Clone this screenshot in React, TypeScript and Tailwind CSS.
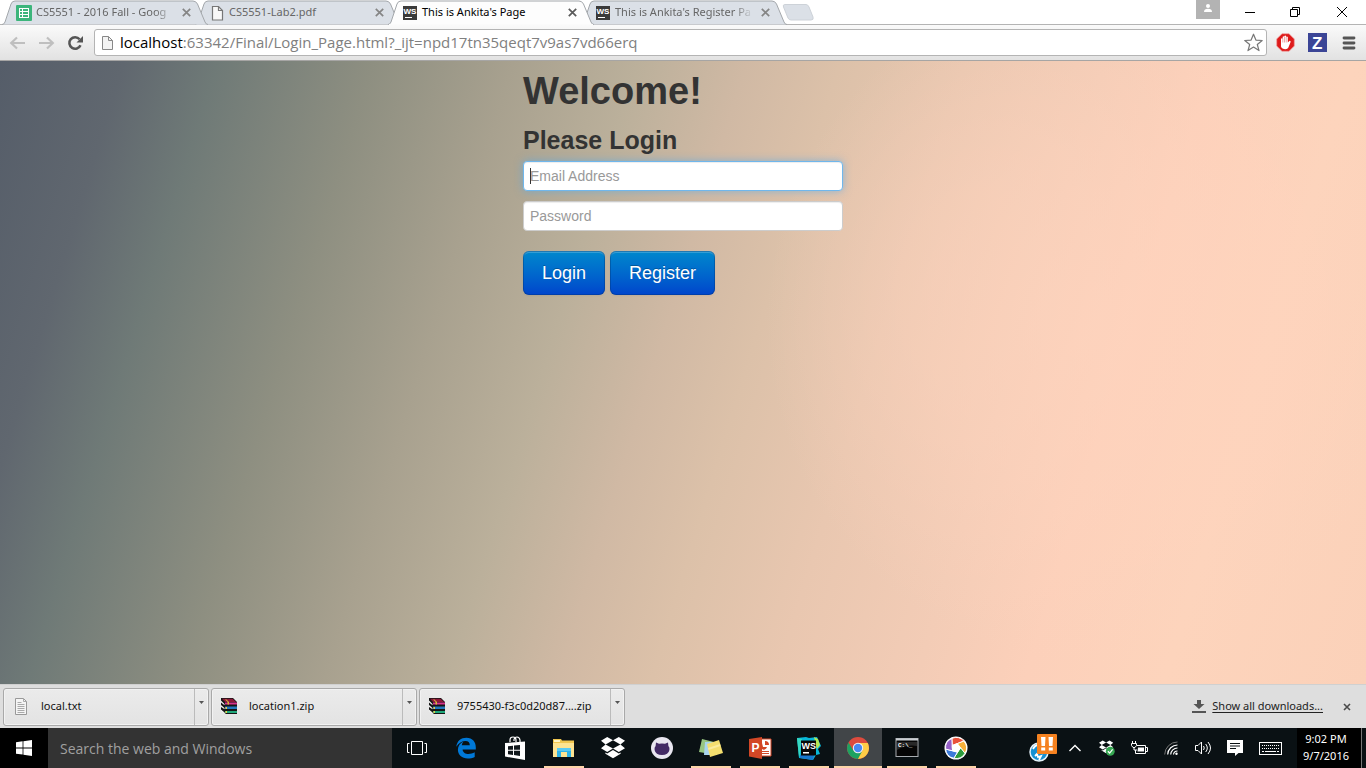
import type { ReactNode } from "react";

const tabs = [
  { title: "CS5551 - 2016 Fall - Goog", icon: <SheetsIcon />, active: false, layer: "z-[3]", fade: true },
  { title: "CS5551-Lab2.pdf", icon: <PageIcon />, active: false, layer: "z-[2]", fade: false },
  { title: "This is Ankita's Page", icon: <WsFavicon />, active: true, layer: "z-[4]", fade: false },
  { title: "This is Ankita's Register Pa", icon: <WsFavicon />, active: false, layer: "z-[1]", fade: true },
];

function SheetsIcon() {
  return (
    <svg width="16" height="16" viewBox="0 0 16 16">
      <rect width="16" height="16" rx="1" fill="#3cb57b" />
      <rect x="3" y="3" width="10" height="10" fill="#fff" />
      <path d="M4 4h2v2H4zM7 4h5v2H7zM4 7h2v2H4zM7 7h5v2H7zM4 10h2v2H4zM7 10h5v2H7z" fill="#3cb57b" />
    </svg>
  );
}

function PageIcon() {
  return (
    <svg width="16" height="16" viewBox="0 0 16 16" fill="#f8f8f8" stroke="#777" strokeWidth="1.2">
      <path d="M3.5 1.5h6l4 4v9.5h-10z" />
      <path d="M9.5 1.5v4h4" fill="none" />
    </svg>
  );
}

function WsFavicon() {
  return (
    <svg width="15" height="15" viewBox="0 0 15 15">
      <rect x="1" y="1" width="14" height="14" fill="#3a3a3a" />
      <text x="1.500" y="9" fontSize="8" fontWeight="700" fontFamily="Liberation Sans, sans-serif" fill="#fff">WS</text>
      <path d="M3 12h7v1H3z" fill="#fff" />
    </svg>
  );
}

function Cross({ color }: { color: string }) {
  return (
    <svg width="9" height="9" viewBox="0 0 9 9" stroke={color} strokeWidth="1.7">
      <path d="M.8.8l7.4 7.4M8.2.8L.8 8.2" />
    </svg>
  );
}

function TabShape({ active }: { active: boolean }) {
  return (
    <svg className="absolute inset-0" width="206" height="25" viewBox="0 0 206 25">
      <path
        d="M0 24.5Q2 24.5 3 22L9 4Q10 1 13 1H191Q194 1 195.500 4L203 22Q204 24.500 206 24.500"
        fill={active ? "#fdfdfd" : "#dbe0e7"}
        stroke="#a3a7ab"
      />
      {active && <path d="M1 24.500H205" stroke="#fbfbfb" />}
    </svg>
  );
}

function TabStrip() {
  return (
    <div className="flex h-[25px] bg-white shadow-[inset_0_-1px_0_#b4b4b4]">
      <div className="flex pl-[2px]" role="tablist">
        {tabs.map((tab) => (
          <div key={tab.title} className={`relative -mr-[13px] h-[25px] w-[206px] ${tab.layer}`}>
            <TabShape active={tab.active} />
            <div className="relative flex h-[25px] items-center pl-[14px]">
              <button role="tab" aria-selected={tab.active} className="flex items-center gap-[5px]">
                <span className="w-[15px]">{tab.icon}</span>
                <span
                  className={`w-[140px] text-left font-['Noto_Sans',sans-serif] text-[11px] whitespace-nowrap ${tab.fade ? "[mask-image:linear-gradient(to_right,black_85%,transparent_99%)]" : ""} ${tab.active ? "text-black" : "text-[#666]"}`}
                >
                  {tab.title}
                </span>
              </button>
              <button aria-label={`Close ${tab.title}`} className="ml-[6px]">
                <Cross color={tab.active ? "#5a5a5a" : "#858585"} />
              </button>
            </div>
          </div>
        ))}
      </div>
      <button aria-label="New tab" className="ml-[8px] h-[25px]">
        <svg width="32" height="17" viewBox="0 0 32 17">
          <path d="M3 .5H24Q26 .5 27 3L31 13Q32 16 29 16H9Q7 16 6 14L1.500 3Q.5 .5 3 .5z" fill="#dbe0e7" stroke="#cdd2d8" />
        </svg>
      </button>
      <div className="ml-auto flex items-start">
        <button aria-label="Profile" className="flex h-[19px] w-6 justify-center bg-[#b3b3b3]">
          <svg width="10" height="14" viewBox="0 0 10 14" fill="#fff">
            <circle cx="5" cy="6" r="2" />
            <path d="M1 12q0-3.200 4-3.200t4 3.200z" />
          </svg>
        </button>
        <button aria-label="Minimize" className="ml-[7px] flex h-6 w-[45px] items-center justify-center">
          <svg width="10" height="10" viewBox="0 0 10 10"><path d="M0 5h10v1H0z" /></svg>
        </button>
        <button aria-label="Restore" className="flex h-6 w-[45px] items-center justify-center">
          <svg width="10" height="10" viewBox="0 0 10 10" fill="none" stroke="#000">
            <path d="M.5 2.500h7v7h-7zM2.500 2V.5h7v7H8" />
          </svg>
        </button>
        <button aria-label="Close" className="flex h-6 w-[49px] items-center justify-center">
          <svg width="10" height="10" viewBox="0 0 10 10" stroke="#000"><path d="M0 0l10 10M10 0L0 10" /></svg>
        </button>
      </div>
    </div>
  );
}

function Toolbar() {
  return (
    <div className="flex h-[36px] items-center border-b border-[#a6a5a4] bg-linear-to-b from-[#fafafa] to-[#e2e2e2] pr-[9px] pl-[9px]">
      <button aria-label="Back">
        <svg width="17" height="16" viewBox="0 0 17 16" fill="none" stroke="#bfbfbf" strokeWidth="2.200">
          <path d="M16 8H2M8 2.500L2.200 8 8 13.500" />
        </svg>
      </button>
      <button aria-label="Forward" className="ml-[12px]">
        <svg width="17" height="16" viewBox="0 0 17 16" fill="none" stroke="#bfbfbf" strokeWidth="2.200">
          <path d="M1 8h14M9 2.500L14.800 8 9 13.500" />
        </svg>
      </button>
      <button aria-label="Reload" className="ml-[12px]">
        <svg width="17" height="16" viewBox="0 0 17 16">
          <path d="M13.500 10.200A5.800 5.800 0 1 1 12.600 4.200" fill="none" stroke="#555" strokeWidth="2.500" />
          <path d="M16 1v6.500H9.500z" fill="#555" />
        </svg>
      </button>
      <div className="ml-[10px] flex h-[27px] flex-1 items-center rounded-[3px] border border-[#b4b4b4] bg-white pr-[3px] pl-[5px]">
        <svg width="16" height="16" viewBox="0 0 16 16" fill="#f3f3f3" stroke="#888">
          <path d="M2.500 1.500h6l4 4v9h-10z" />
          <path d="M8.500 1.500v4h4" fill="none" />
        </svg>
        <div className="ml-[4px] flex-1 text-[15px] whitespace-nowrap text-[#808080]">
          <span className="text-black">localhost</span>:63342/Final/Login_Page.html?_ijt=npd17tn35qeqt7v9as7vd66erq
        </div>
        <button aria-label="Bookmark this page">
          <svg width="19" height="19" viewBox="0 0 19 19" fill="#fff" stroke="#777" strokeWidth="1.200" strokeLinejoin="round">
            <path d="M9.500 1.200l2.400 5.900 6.300.4-4.900 4 1.700 6.100-5.500-3.500L4 17.600l1.700-6.100-4.900-4 6.300-.4z" />
          </svg>
        </button>
      </div>
      <button aria-label="Ad blocker" className="ml-[9px]">
        <svg width="19" height="19" viewBox="0 0 19 19">
          <path d="M6 .7h7L18.300 6v7L13 18.300H6L.7 13V6z" fill="#de1b1b" stroke="#f0a0a0" strokeWidth=".7" />
          <path d="M5 10.500V5.800q.8-.9 1.700 0V3.800q.9-.9 1.700 0V3q.9-.9 1.700 0v1q.9-.9 1.700 0v5.500l1.500-1.600q1.200-.2 1.400.8L12.400 14.500q-.8 1.800-2.900 1.800-3.600 0-4.500-2.800z" fill="#fff" />
          <path d="M6.800 5.500v4M8.500 4v5.500M10.200 4v5.500" stroke="#e57373" strokeWidth=".6" />
        </svg>
      </button>
      <button aria-label="Zotero" className="ml-[13px]">
        <svg width="19" height="19" viewBox="0 0 19 19">
          <rect width="19" height="19" fill="#3b4596" />
          <text x="4" y="15.500" fontSize="17" fontWeight="700" fontFamily="Liberation Sans, sans-serif" fill="#fff">Z</text>
        </svg>
      </button>
      <button aria-label="Menu" className="mr-px ml-[15px]">
        <svg width="14" height="14" viewBox="0 0 14 14" stroke="#555" strokeWidth="2.800" strokeLinecap="round">
          <path d="M2 2h10M2 7h10M2 12h10" />
        </svg>
      </button>
    </div>
  );
}

const actionButton =
  "h-11 rounded-md bg-linear-to-b from-[#0088cc] to-[#0044cc] px-[19px] text-[18px] text-white [text-shadow:0_-1px_0_rgba(0,0,0,0.25)] shadow-[inset_0_0_0_1px_rgba(0,50,110,0.35),inset_0_2px_0_rgba(255,255,255,0.2),0_1px_2px_rgba(0,0,0,0.05)]";
const field =
  "block h-[30px] w-full rounded-[4px] border bg-white px-[6px] text-[14px] text-[#555] outline-none placeholder:text-[#999]";

function LoginPage() {
  return (
    <main className="flex-1 overflow-hidden bg-[radial-gradient(ellipse_24%_55%_at_80%_42%,rgba(255,212,190,0.7)_0%,rgba(255,212,190,0.45)_50%,transparent_100%),linear-gradient(107deg,#555d69_0%,#60676f_8%,#6f7a77_14%,#8e8f81_24%,#a8a18f_33%,#bbb09b_41%,#d0b9a4_48%,#dcc1a9_54%,#e9c7b0_62%,#f3ccb6_71%,#fcd0ba_78%,#fdd4bc_87%,#fbd1b9_100%)] font-['Liberation_Sans',Arial,sans-serif]">
      <form className="mx-auto w-80 pt-[10px]" onSubmit={(e) => e.preventDefault()}>
        <h1 className="text-[38px] leading-10 font-bold text-[#333]">Welcome!</h1>
        <h2 className="mt-[9px] mb-px text-[25px] leading-10 font-bold text-[#333]">Please Login</h2>
        <div className="relative">
          <input
            type="email"
            aria-label="Email Address"
            placeholder="Email Address"
            autoFocus
            className={`peer border-[#70b7ec] shadow-[inset_0_1px_1px_rgba(0,0,0,0.075),0_0_8px_rgba(82,168,236,0.6)] ${field}`}
          />
          <span className="pointer-events-none absolute top-[7px] left-[7px] hidden h-4 w-px bg-[#333] peer-placeholder-shown:block" />
        </div>
        <input
          type="password"
          aria-label="Password"
          placeholder="Password"
          className={`${field} mt-[10px] border-[#ccc] shadow-[inset_0_1px_1px_rgba(0,0,0,0.075)]`}
        />
        <div className="mt-5 flex gap-[5px]">
          <button type="submit" className={actionButton}>Login</button>
          <button type="button" className={actionButton}>Register</button>
        </div>
      </form>
    </main>
  );
}

function TextFileIcon() {
  return (
    <svg width="16" height="17" viewBox="0 0 16 17">
      <path d="M2.500.5h8l3 3v13h-11z" fill="#f5f5f5" stroke="#999" />
      <path d="M10.500.5v3h3M4.500 4.500h4M4.500 6.500h7M4.500 8.500h7M4.500 10.500h7M4.500 12.500h7M4.500 14.500h7" fill="none" stroke="#aaa" />
    </svg>
  );
}

function ArchiveIcon() {
  return (
    <svg width="16" height="17" viewBox="0 0 16 17">
      <path d="M0 0h12l4 4v12H5L0 12z" fill="#151515" />
      <path d="M1 .8h10.500L15 4H4z" fill="#8c1738" />
      <path d="M4 4.500h12v2H4z" fill="#d8308c" />
      <path d="M4 8.500h12v2.500H4z" fill="#2278bd" />
      <path d="M4 13h12v2H4z" fill="#20a87b" />
      <path d="M0 2.500L3.500 6v1.200L0 4.500zM0 7l3.500 3v1.200L0 9zM0 11.500l3.500 3v1.200L0 13.500z" fill="#eee" />
      <path d="M4 1.500l2.500 2.300v2.700H8V4L5.500 1.500z" fill="#d9b83a" />
      <path d="M4.500 9H6v2H4.500zM4.500 13H6v2H4.500z" fill="#e6cf4a" />
    </svg>
  );
}

const downloads = [
  { name: "local.txt", icon: <TextFileIcon /> },
  { name: "location1.zip", icon: <ArchiveIcon /> },
  { name: "9755430-f3c0d20d87....zip", icon: <ArchiveIcon /> },
];

function DownloadShelf() {
  return (
    <div className="flex h-11 items-center border-t border-[#d0d0d0] bg-[#dedede] pl-[3px] font-['Noto_Sans',sans-serif]">
      <div className="flex gap-[2px]">
        {downloads.map((d) => (
          <div key={d.name} className="flex h-[38px] w-[206px] rounded-[3px] border border-[#a9a9a9] bg-linear-to-b from-[#ebebeb] to-[#e3e3e3] shadow-[inset_0_0_0_1px_#f2f2f2]">
            <button className="flex flex-1 items-center border-r border-[#bbb] pl-[9px] text-[11px] text-[#111]">
              {d.icon}
              <span className="ml-[12px] whitespace-nowrap">{d.name}</span>
            </button>
            <button aria-label={`Options for ${d.name}`} className="flex w-[13px] justify-center pt-[12px]">
              <svg width="5" height="3" viewBox="0 0 5 3"><path d="M0 0h5L2.500 3z" fill="#555" /></svg>
            </button>
          </div>
        ))}
      </div>
      <a href="#downloads" className="ml-auto flex items-center gap-[6px] text-[11px] text-[#222] underline underline-offset-2">
        <svg width="14" height="13" viewBox="0 0 14 13" fill="#555">
          <path d="M5 0h4v4h3.500L7 9 1.500 4H5zM0 11h14v2H0z" />
        </svg>
        Show all downloads...
      </a>
      <button aria-label="Close downloads bar" className="mr-[15px] ml-[20px]">
        <svg width="8" height="8" viewBox="0 0 8 8" stroke="#4a4a4a" strokeWidth="1.600"><path d="M1 1l6 6M7 1L1 7" /></svg>
      </button>
    </div>
  );
}

function DropboxShape() {
  return <path d="M6.200 1L0 4.800l4.600 3.600L12 4.200zM17.800 1L12 4.200l7.400 4.200L24 4.800zM0 12.200l6.200 3.900 5.800-3.500-7.400-4.200zM24 12.200l-6.200 3.900-5.800-3.500 7.400-4.200zM12 14l-5.800 3.600-1.800-1.200v1.400L12 22.300l7.600-4.500v-1.400l-1.800 1.200z" fill="#fff" />;
}

type App = { name: string; open?: boolean; active?: boolean; art: ReactNode };

const apps: App[] = [
  {
    name: "Task view",
    art: <path d="M6.500 5.500h11v13h-11zM4.500 7.500h-2v9h2M19.500 7.500h2v9h-2" fill="none" stroke="#fff" />,
  },
  {
    name: "Edge",
    art: <path d="M2.300 10.800C3 5 7 1.800 12.400 1.800c6.200 0 9.400 4.300 9.400 9.400v2.300H8.600c.3 3.300 3 4.500 5.800 4.500 2.200 0 4.400-.6 6.300-1.700v4.600c-2 1.100-4.600 1.500-7 1.500-5.700 0-9.800-3.400-9.800-8.600 0-3.900 2.100-6.800 5.600-8.400-1 1.100-1.500 2.400-1.700 3.800h8c0-2.700-1.500-4.200-4.300-4.200-3.500 0-6.800 2-9.200 5.800z" fill="#0078d7" />,
  },
  {
    name: "Store",
    art: (
      <>
        <path d="M7 6V4q0-3 3-3t3 3v2M11 5V3.500Q11.500 1 14 1t3 3v2" fill="none" stroke="#fff" strokeWidth="1.200" />
        <path d="M2 7l20-1.500V24L2 20.500z" fill="#fff" />
        <path d="M5 10.200l5-.5v4.100H5zM11 9.600l6-.6v4.800h-6zM5 14.800h5v4.100l-5-.6zM11 14.800h6v5.100l-6-.8z" fill="#10171b" />
      </>
    ),
  },
  {
    name: "File Explorer",
    open: true,
    art: (
      <>
        <path d="M1 3h8l1 1.500h12V21H1z" fill="#f0c64f" />
        <path d="M2 4h6v2H2z" fill="#fff4c5" />
        <path d="M1 7h21v14H1z" fill="#fde391" />
        <path d="M5 12h14v9h-4v-5H9v5H5z" fill="#2eb2e8" />
        <path d="M5 12h14v3H5z" fill="#5acaf2" />
      </>
    ),
  },
  { name: "Dropbox", art: <DropboxShape /> },
  {
    name: "GitHub",
    art: (
      <>
        <circle cx="12" cy="12" r="11" fill="#e9e6f0" />
        <path d="M6 6.500l3 1.200q3-.5 6 0l3-1.200.4 3.500q1.500 1.700 1 4-1 5-7.400 5T4.600 14q-.5-2.300 1-4z" fill="#432a65" />
      </>
    ),
  },
  {
    name: "Sticky Notes",
    open: true,
    art: (
      <>
        <path d="M3 3l12 3-3 12-12-2z" fill="#98c681" />
        <path d="M6 6h12v13H5z" fill="#a9d5ee" />
        <path d="M8 8l12-4 4 13-13 4z" fill="#f4df6f" />
        <path d="M9 12l12-4 .5 2L9.500 14z" fill="#fbed9e" />
      </>
    ),
  },
  {
    name: "PowerPoint",
    open: true,
    art: (
      <>
        <path d="M11 3h12v17H11z" fill="#fff" stroke="#d24726" />
        <path d="M14 7a3.500 3.500 0 1 0 5 4h-4z" fill="#d24726" />
        <path d="M17 5v4h4q0-4-4-4zM14 15h7v1h-7zM14 17h7v1h-7z" fill="#d24726" />
        <path d="M1 3l13-2v22L1 20.500z" fill="#d24726" />
        <text x="3.500" y="16" fontSize="12" fontWeight="700" fontFamily="Liberation Sans, sans-serif" fill="#fff">P</text>
      </>
    ),
  },
  {
    name: "WebStorm",
    open: true,
    art: (
      <>
        <path d="M0 2l9-1 3 1 8-1 4 9-3 3 2 5-4 1-3 5-14-2z" fill="#08b8d8" />
        <path d="M17 1l4 2 2 6-3 4z" fill="#b5e853" />
        <path d="M0 2l5 1-2 15-1 3z" fill="#37d9c0" />
        <path d="M3 19h14l-1 5-13-2z" fill="#1677cf" />
        <rect x="4" y="4.500" width="15" height="15" fill="#080808" />
        <text x="4.500" y="13" fontSize="9" fontWeight="700" fontFamily="Liberation Sans, sans-serif" fill="#fff">WS</text>
        <path d="M6 16h6v1.500H6z" fill="#fff" />
      </>
    ),
  },
  {
    name: "Chrome",
    open: true,
    active: true,
    art: (
      <>
        <circle cx="12" cy="12" r="11" fill="#dd4b3e" />
        <path d="M2.500 6.500A11 11 0 0 0 12 23l5-8.200-5 2.200-5-3z" fill="#1da261" />
        <path d="M12 7h9.800A11 11 0 0 1 12 23l4.500-8.500z" fill="#ffcd46" />
        <circle cx="12" cy="12" r="5.200" fill="#f3f3f3" />
        <circle cx="12" cy="12" r="4.200" fill="#4a89f3" />
      </>
    ),
  },
  {
    name: "Command Prompt",
    open: true,
    art: (
      <>
        <rect x="1" y="2.500" width="22" height="18" fill="#050505" stroke="#a8acb0" />
        <path d="M1 2.500h22v2H1z" fill="#c9ced2" />
        <path d="M2 6h20v4q-10-2-20 4z" fill="#282828" />
        <text x="3" y="11" fontSize="6" fontWeight="700" fontFamily="Liberation Mono, monospace" fill="#fff">C:\_</text>
      </>
    ),
  },
  {
    name: "Picasa",
    open: true,
    art: (
      <>
        <circle cx="12" cy="12" r="11.500" fill="#fff" />
        <g stroke="#fff" strokeWidth=".9" transform="rotate(15 12 12)">
          <path d="M7.700 10.600L5.500 3.800A10.500 10.500 0 0 1 17.800 3.300L12 7.500z" fill="#e9503a" />
          <path d="M12 7.500L17.800 3.300A10.500 10.500 0 0 1 22.100 14.800L16.300 10.600z" fill="#f6b03a" />
          <path d="M16.300 10.600L22.100 14.800A10.500 10.500 0 0 1 12.500 22.500L14.600 15.600z" fill="#2c9b3b" />
          <path d="M14.600 15.600L12.500 22.500A10.500 10.500 0 0 1 2.200 15.700L9.400 15.600z" fill="#3c7bd8" />
          <path d="M9.400 15.600L2.200 15.700A10.500 10.500 0 0 1 5.500 3.800L7.700 10.600z" fill="#9560c8" />
          <path d="M12 7.500l4.300 3.100-1.700 5H9.400l-1.700-5z" fill="#fff" />
        </g>
      </>
    ),
  },
];

function TrayIcon({ name, box, children }: { name: string; box: string; children: ReactNode }) {
  return (
    <button aria-label={name} className={`flex h-10 items-center justify-center ${box}`}>
      {children}
    </button>
  );
}

function Taskbar() {
  return (
    <div className="flex h-10 bg-[#0a1114] text-white">
      <button aria-label="Start" className="flex w-12 items-center justify-center bg-black">
        <svg width="16" height="16" viewBox="0 0 16 16" fill="#fff">
          <path d="M0 2.200L6.600 1.300v6.200H0zM7.400 1.200L16 0v7.500H7.400zM0 8.400h6.600v6.200L0 13.700zM7.400 8.400H16V16l-8.600-1.300z" />
        </svg>
      </button>
      <input
        type="text"
        aria-label="Search the web and Windows"
        placeholder="Search the web and Windows"
        className="w-[344px] bg-[#333] px-3 text-[14px] text-white outline-none placeholder:text-[#a0a0a0]"
      />
      <div className="flex gap-px pl-px">
        {apps.map((app) => (
          <button
            key={app.name}
            aria-label={app.name}
            className={`flex h-10 w-12 flex-col items-center justify-between ${app.active ? "bg-[#414548]" : ""}`}
          >
            <svg className="mt-2" width="24" height="24" viewBox="0 0 24 24">{app.art}</svg>
            {app.open && <span className={`h-[2px] bg-[#fcd4a8] ${app.active ? "w-12" : "w-10"}`} />}
          </button>
        ))}
      </div>
      <div className="ml-auto flex items-center">
        <TrayIcon name="Sync paused" box="w-[32px]">
          <svg width="28" height="28" viewBox="0 0 28 28">
            <circle cx="10" cy="18" r="9" fill="#1590d2" stroke="#e4f2fa" strokeWidth="1.500" />
            <path d="M4 15q2-4 5-4M6 22l2-2 1 3 3-1-2 4" fill="none" stroke="#fff" strokeWidth="1.800" />
            <rect x="8" width="20" height="20" rx="1" fill="#f58220" />
            <path d="M12 3h4.500l-.5 9h-3.500zM19.500 3H24l-.5 9H20zM12.200 13.500h4v3h-4zM19.800 13.500h4v3h-4z" fill="#fff" />
          </svg>
        </TrayIcon>
        <TrayIcon name="Show hidden icons" box="w-8">
          <svg width="12" height="8" viewBox="0 0 12 8" fill="none" stroke="#fff" strokeWidth="1.400"><path d="M.5 7L6 1.500 11.500 7" /></svg>
        </TrayIcon>
        <TrayIcon name="Dropbox up to date" box="w-8">
          <svg width="16" height="16" viewBox="0 0 27 27">
            <DropboxShape />
            <circle cx="19" cy="19" r="7.500" fill="#36a852" />
            <path d="M15 19l3 3 5-6" fill="none" stroke="#fff" strokeWidth="2" />
          </svg>
        </TrayIcon>
        <TrayIcon name="Battery charging" box="w-8">
          <svg width="17" height="14" viewBox="0 0 17 14" fill="none" stroke="#fff">
            <path d="M6 4.500h8.500v8h-10V9M14.500 6.500h2v4h-2M1.500 0v2M4.500 0v2M.5 2.500h5v2l-1.500 2H2L.5 4.500zM3 6.500V9h3" />
            <path d="M7 6.500h6v4H6.500z" fill="#fff" stroke="none" />
          </svg>
        </TrayIcon>
        <TrayIcon name="Wi-Fi" box="w-8">
          <svg width="14" height="14" viewBox="0 0 14 14" fill="none">
            <path d="M.7 13.500A12.800 12.800 0 0 1 13.500 1" stroke="#777" />
            <path d="M3.700 13.500A9.800 9.800 0 0 1 13.500 4M6.700 13.500A6.800 6.800 0 0 1 13.500 7M9.500 13.500a4 4 0 0 1 4-3.500" stroke="#fff" strokeWidth="1.200" />
            <circle cx="12.500" cy="12.700" r="1.200" fill="#fff" />
          </svg>
        </TrayIcon>
        <TrayIcon name="Volume" box="w-8">
          <svg width="17" height="14" viewBox="0 0 17 14" fill="none" stroke="#fff">
            <path d="M.5 4.500H3L6.500 1v12L3 9.500H.5zM8.500 5q1.500 2 0 4M10.700 3q3.200 4 0 8M13 1q5 6 0 12" />
          </svg>
        </TrayIcon>
        <TrayIcon name="Action center" box="w-8">
          <svg width="16" height="16" viewBox="0 0 16 16">
            <path d="M0 0h16v13h-4.500L8 16v-3H0z" fill="#fff" />
            <path d="M3 3h10v1H3zM3 5.500h10v1H3zM3 8h6v1H3z" fill="#0a1114" />
          </svg>
        </TrayIcon>
        <TrayIcon name="Touch keyboard" box="w-[38px]">
          <svg width="23" height="13" viewBox="0 0 23 13" fill="none" stroke="#fff">
            <rect x=".5" y=".5" width="22" height="12" />
            <path d="M3 3.500h17M3 6.500h17" strokeDasharray="1 1" />
            <path d="M3 9.500h2M6 9.500h11M18 9.500h2" />
          </svg>
        </TrayIcon>
        <button className="ml-[8px] h-10 w-[65px] border-r border-[#777] bg-black pr-[6px] pb-[3px] text-center font-['Noto_Sans',sans-serif] text-[11px] leading-[17px] whitespace-nowrap">
          9:02 PM
          <br />
          9/7/2016
        </button>
        <button aria-label="Show desktop" className="h-10 w-1" />
      </div>
    </div>
  );
}

export default function App() {
  return (
    <div className="flex h-screen flex-col overflow-hidden font-['Open_Sans','Noto_Sans',sans-serif]">
      <TabStrip />
      <Toolbar />
      <LoginPage />
      <DownloadShelf />
      <Taskbar />
    </div>
  );
}
